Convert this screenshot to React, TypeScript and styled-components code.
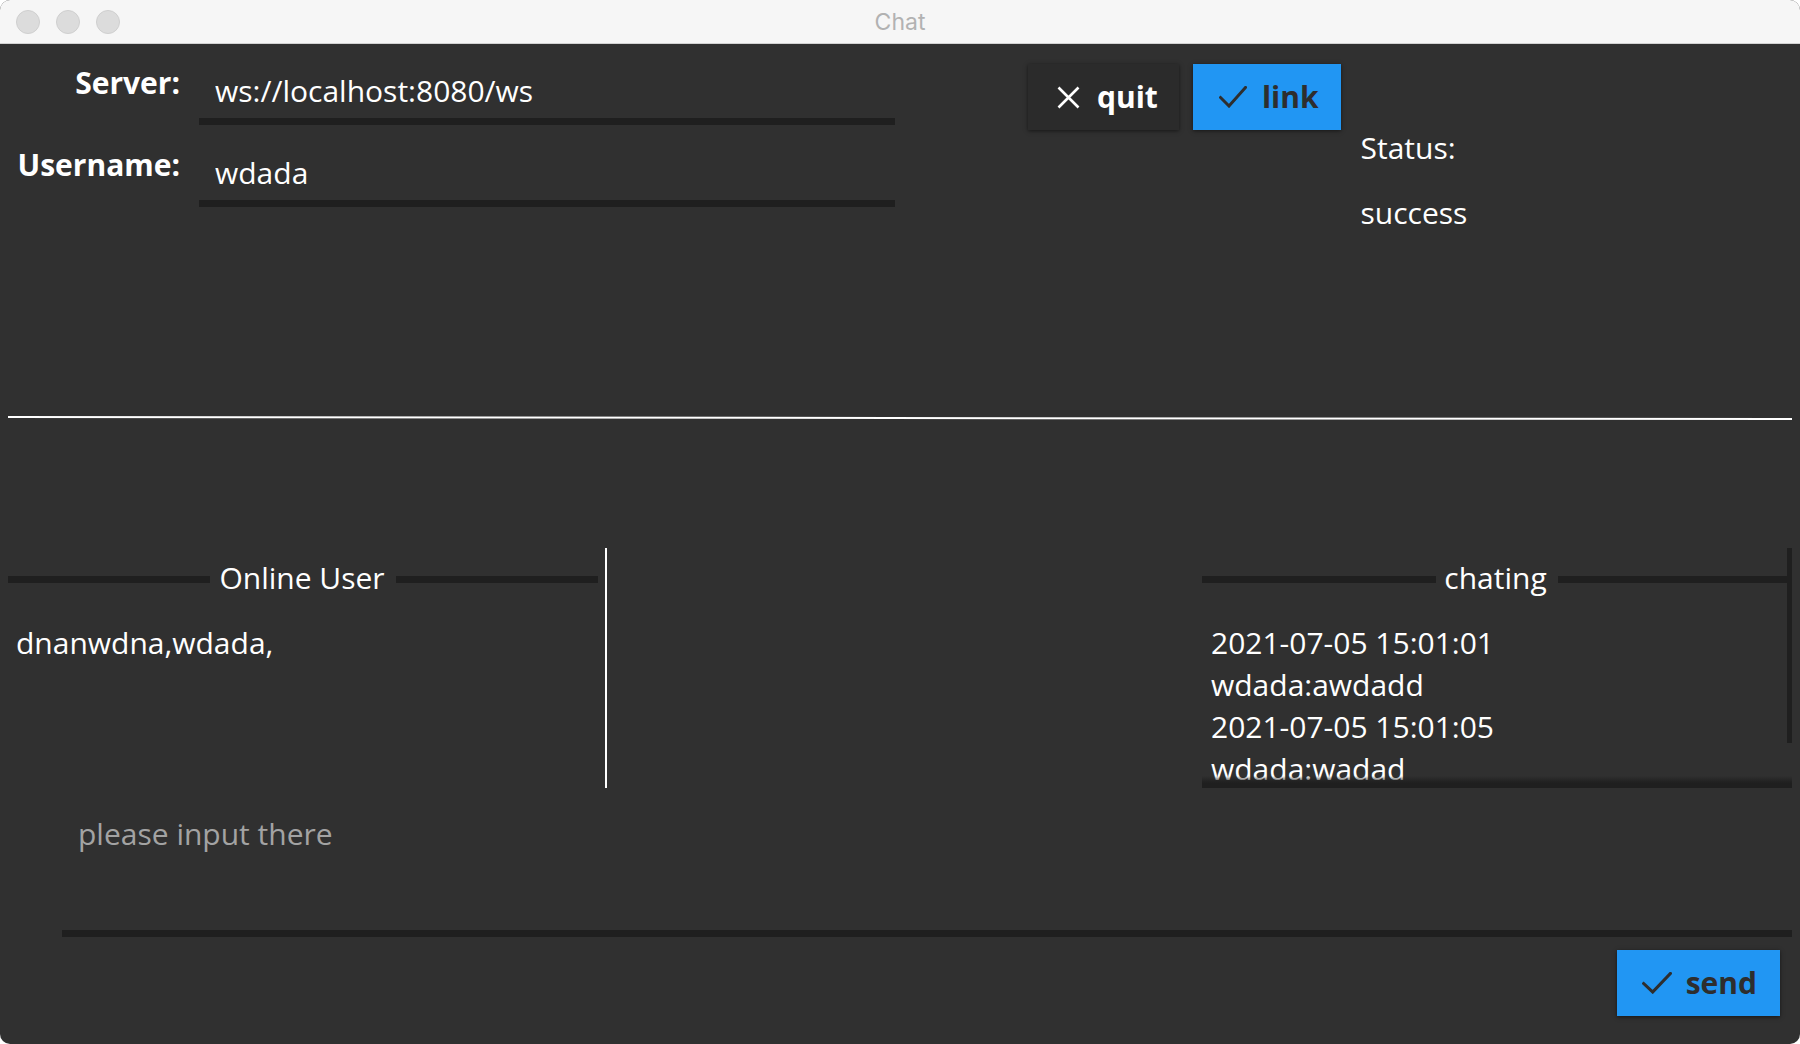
import React from "react";
import styled, { createGlobalStyle } from "styled-components";

const Global = createGlobalStyle`
  html, body { margin: 0; padding: 0; background: #ffffff; }
  body { font-family: "Open Sans", "Noto Sans", sans-serif; }
  * { box-sizing: border-box; }
`;

const Window = styled.div`
  width: 1800px;
  height: 1044px;
  background: #303030;
  border-radius: 10px;
  overflow: hidden;
  display: flex;
  flex-direction: column;
  color: #ffffff;
  font-family: "Open Sans", "Noto Sans", sans-serif;
`;

const TitleBar = styled.div`
  height: 44px;
  flex: none;
  background: #f6f6f6;
  border-bottom: 1px solid #d2d2d2;
  display: grid;
  grid-template-columns: 1fr auto 1fr;
  align-items: center;
`;

const Lights = styled.div`
  display: flex;
  gap: 16px;
  padding-left: 16px;
`;

const Light = styled.span`
  width: 24px;
  height: 24px;
  border-radius: 50%;
  background: #dcdcdc;
  border: 1px solid #cfcfcf;
`;

const Title = styled.div`
  font-family: Inter, "Noto Sans", sans-serif;
  font-size: 23px;
  color: #b2b2b2;
  padding-top: 1px;
`;

const Content = styled.div`
  flex: 1;
  display: flex;
  flex-direction: column;
  padding: 0 8px;
`;

const TopSection = styled.div`
  height: 373px;
  display: flex;
  align-items: flex-start;
`;

const FormGrid = styled.div`
  margin-top: 18px;
  display: grid;
  grid-template-columns: 172px 696px;
  column-gap: 19px;
  row-gap: 19px;
`;

const Label = styled.div`
  font-weight: 700;
  font-size: 30px;
  line-height: 42px;
  text-align: right;
  color: #ffffff;
`;

const Field = styled.input`
  height: 63px;
  width: 100%;
  background: transparent;
  border: none;
  border-bottom: 7px solid #1f1f1f;
  padding: 0 0 0 16px;
  margin: 0;
  font-family: "Open Sans", "Noto Sans", sans-serif;
  font-size: 30px;
  color: #ffffff;
  outline: none;
`;

const ButtonGroup = styled.div`
  margin-top: 20px;
  margin-left: 133px;
  display: flex;
  gap: 14px;
`;

const Button = styled.button<{ $primary?: boolean; $padL: number; $padR: number; $gap: number }>`
  height: 66px;
  display: flex;
  align-items: center;
  gap: ${(p) => p.$gap}px;
  padding: 0 ${(p) => p.$padR}px 0 ${(p) => p.$padL}px;
  border: none;
  border-radius: 0;
  background: ${(p) => (p.$primary ? "#2196f3" : "#2b2b2b")};
  color: ${(p) => (p.$primary ? "#2e2e2e" : "#ffffff")};
  box-shadow: 0 1px 4px rgba(0, 0, 0, 0.55);
  font-family: "Open Sans", "Noto Sans", sans-serif;
  font-weight: 700;
  font-size: 30px;
  line-height: 1;
  cursor: pointer;
  svg { flex: none; }
`;

const StatusBox = styled.div`
  margin-left: 20px;
  margin-top: 83px;
  display: flex;
  flex-direction: column;
  gap: 23px;
  font-size: 30px;
  line-height: 42px;
`;

const Separator = styled.div`
  height: 2px;
  flex: none;
  background: #ffffff;
  transform: rotate(0.064deg);
`;

const PanelRow = styled.div`
  margin-top: 129px;
  height: 240px;
  display: flex;
  align-items: stretch;
`;

const Panel = styled.div<{ $right?: boolean }>`
  width: 590px;
  position: relative;
  padding-top: 9px;
  margin-left: ${(p) => (p.$right ? "auto" : "0")};
  display: flex;
  flex-direction: column;
  overflow: hidden;
`;

const Heading = styled.div`
  display: flex;
  align-items: center;
  height: 42px;
  flex: none;
  font-size: 30px;
  line-height: 42px;
`;

const HeadingLine = styled.span`
  flex: 1;
  height: 7px;
  margin-top: 3px;
  background: #1f1f1f;
`;

const HeadingText = styled.span<{ $gapL: number; $gapR: number }>`
  padding: 0 ${(p) => p.$gapR}px 0 ${(p) => p.$gapL}px;
`;

const UserList = styled.div`
  margin-top: 23px;
  padding-left: 8px;
  font-size: 30px;
  line-height: 42px;
`;

const Divider = styled.div`
  width: 2px;
  margin-left: 7px;
  background: #ffffff;
`;

const Messages = styled.div`
  margin-top: 23px;
  padding-left: 9px;
  font-size: 30px;
  line-height: 42px;
  flex: 1;
  overflow: hidden;
`;

const Scrollbar = styled.div`
  position: absolute;
  right: 0;
  top: 0;
  width: 5px;
  height: 195px;
  background: #1f1f1f;
`;

const BottomShade = styled.div`
  position: absolute;
  left: 0;
  right: 0;
  bottom: 0;
  height: 12px;
  background: linear-gradient(to bottom, rgba(31, 31, 31, 0) 0%, rgba(31, 31, 31, 0.8) 45%, #1f1f1f 60%, #1f1f1f 100%);
`;

const InputArea = styled.textarea`
  margin-left: 54px;
  height: 149px;
  flex: none;
  background: transparent;
  border: none;
  border-bottom: 7px solid #1f1f1f;
  padding: 25px 0 0 16px;
  font-family: "Open Sans", "Noto Sans", sans-serif;
  font-size: 30px;
  line-height: 42px;
  color: #ffffff;
  resize: none;
  outline: none;
  &::placeholder { color: #a3a3a3; opacity: 1; }
`;

const SendRow = styled.div`
  margin-top: 13px;
  padding-right: 12px;
  display: flex;
  justify-content: flex-end;
`;

const CloseIcon = () => (
  <svg width="23" height="23" viewBox="0 0 23 23">
    <path d="M1.5 1.5 L21.5 21.5 M21.5 1.5 L1.5 21.5" stroke="#ffffff" strokeWidth="2.6" fill="none" />
  </svg>
);

const CheckIcon = ({ w = 28 }: { w?: number }) => (
  <svg width={w} height="22" viewBox="0 0 28 22" preserveAspectRatio="none">
    <path d="M1.5 11.5 L10 20 L26.5 1.5" stroke="#2e2e2e" strokeWidth="3" fill="none" strokeLinecap="square" />
  </svg>
);

const messages = [
  "2021-07-05 15:01:01",
  "wdada:awdadd",
  "2021-07-05 15:01:05",
  "wdada:wadad",
];

export default function App() {
  return (
    <>
      <Global />
      <Window>
        <TitleBar>
          <Lights>
            <Light />
            <Light />
            <Light />
          </Lights>
          <Title>Chat</Title>
          <div />
        </TitleBar>
        <Content>
          <TopSection>
            <FormGrid>
              <Label>Server:</Label>
              <Field readOnly value="ws://localhost:8080/ws" />
              <Label>Username:</Label>
              <Field readOnly value="wdada" />
            </FormGrid>
            <ButtonGroup>
              <Button $padL={29} $padR={21} $gap={17}>
                <CloseIcon />
                quit
              </Button>
              <Button $primary $padL={26} $padR={22} $gap={15}>
                <CheckIcon />
                link
              </Button>
            </ButtonGroup>
            <StatusBox>
              <div>Status:</div>
              <div>success</div>
            </StatusBox>
          </TopSection>
          <Separator />
          <PanelRow>
            <Panel>
              <Heading>
                <HeadingLine />
                <HeadingText $gapL={9} $gapR={11}>Online User</HeadingText>
                <HeadingLine />
              </Heading>
              <UserList>dnanwdna,wdada,</UserList>
            </Panel>
            <Divider />
            <Panel $right>
              <Heading>
                <HeadingLine />
                <HeadingText $gapL={8} $gapR={11}>chating</HeadingText>
                <HeadingLine />
              </Heading>
              <Messages>
                {messages.map((m, i) => (
                  <div key={i}>{m}</div>
                ))}
              </Messages>
              <Scrollbar />
              <BottomShade />
            </Panel>
          </PanelRow>
          <InputArea placeholder="please input there" />
          <SendRow>
            <Button $primary $padL={25} $padR={23} $gap={14}>
              <CheckIcon w={30} />
              send
            </Button>
          </SendRow>
        </Content>
      </Window>
    </>
  );
}
